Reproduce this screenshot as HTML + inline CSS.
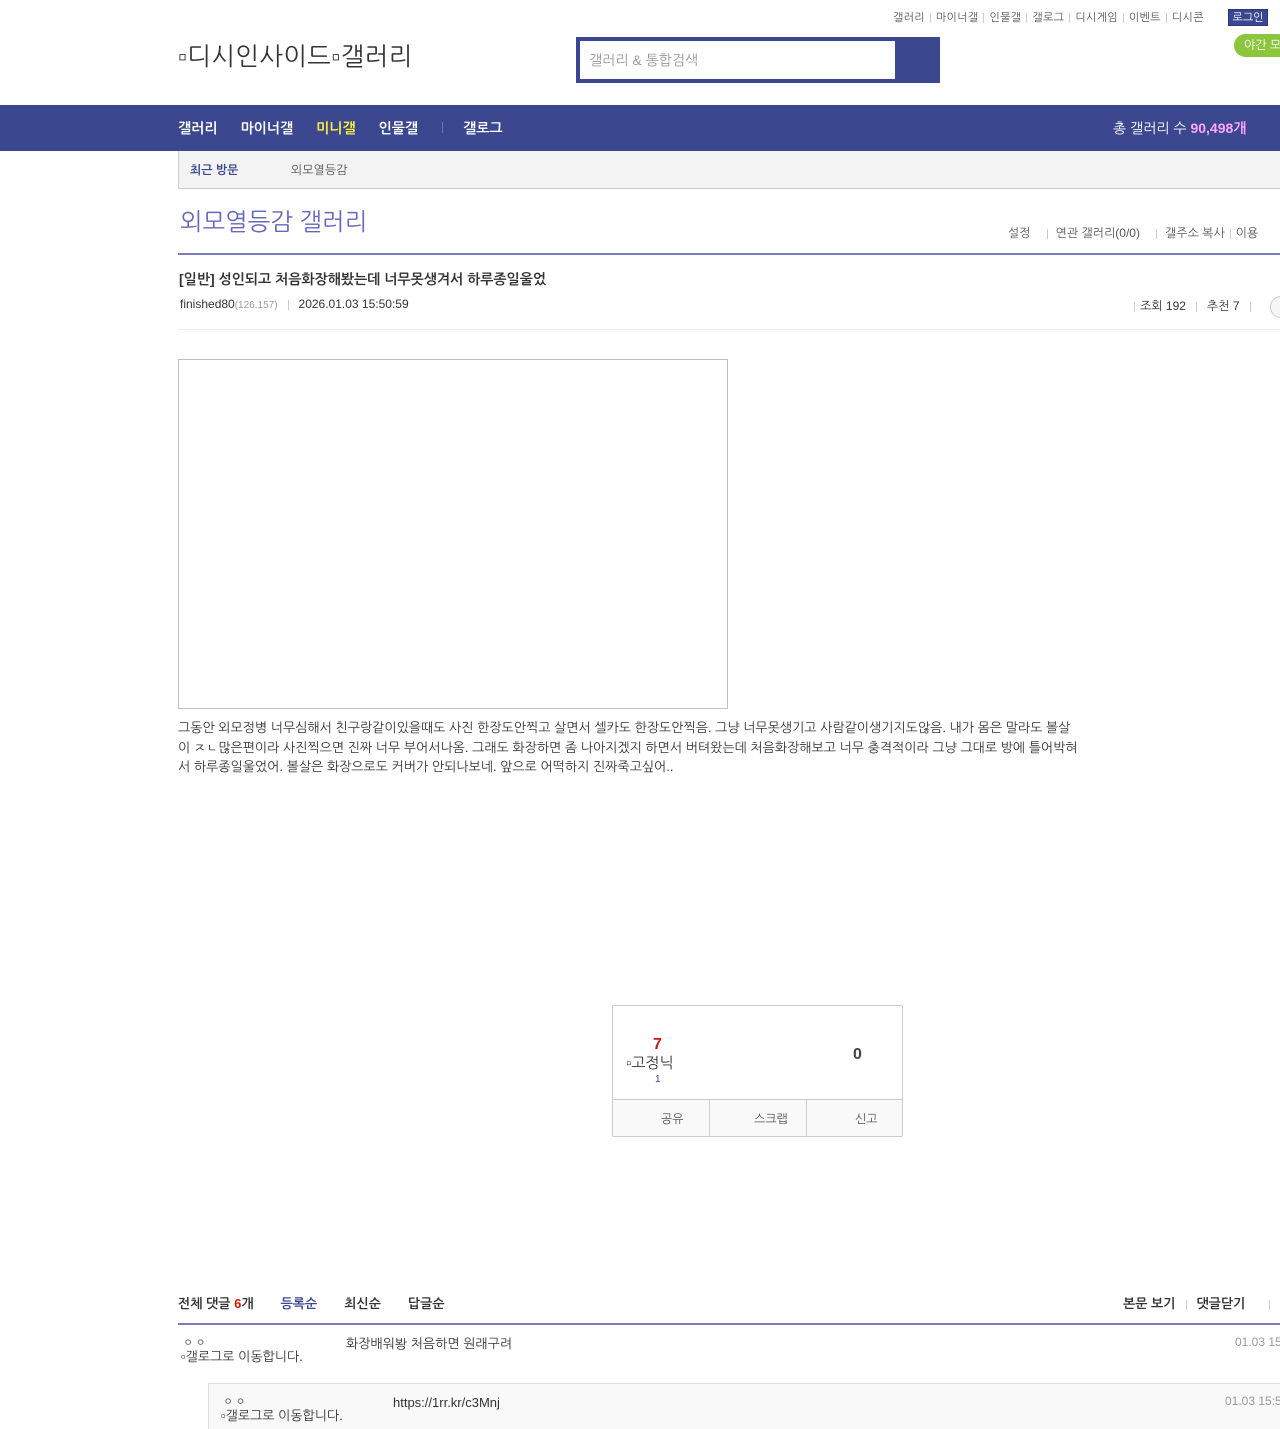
<!DOCTYPE html>
<html><head><meta charset="utf-8"><style>
*{margin:0;padding:0;box-sizing:border-box}
body{width:1280px;height:1429px;overflow:hidden;background:#fff;font-family:"Liberation Sans","NanumGothic","Noto Sans CJK KR",sans-serif;color:#333;position:relative}
.a{position:absolute;white-space:nowrap}
.sep{display:inline-block;width:1px;height:10px;background:#ccc;margin:0 5px;vertical-align:middle}
</style></head><body>
<div class="a" style="top:11px;left:893px;font-size:11px;color:#555;letter-spacing:0.3px">갤러리<span class="sep"></span>마이너갤<span class="sep"></span>인물갤<span class="sep"></span>갤로그<span class="sep"></span>디시게임<span class="sep"></span>이벤트<span class="sep"></span>디시콘</div>
<div class="a" style="top:9px;left:1228px;width:40px;height:17px;background:#3b4890;color:#fff;font-size:11px;line-height:17px;text-align:center;border:1px solid #29367a">로그인</div>
<div class="a" style="top:34px;left:1234px;width:60px;height:23px;background:#8cc63f;border-radius:12px;color:#fff;font-size:12px;line-height:23px;padding-left:10px">야간 모드</div>
<div class="a" style="top:41px;left:178px;font-size:25px;color:#333;letter-spacing:0.5px">▫디시인사이드▫갤러리</div>
<div class="a" style="top:37px;left:576px;width:364px;height:46px;background:#3b4890"></div>
<div class="a" style="top:41px;left:580px;width:315px;height:38px;background:#fff;font-size:14px;color:#999;line-height:38px;padding-left:9px">갤러리 &amp; 통합검색</div>
<div class="a" style="top:105px;left:0;width:1280px;height:46px;background:#3b4890"></div>
<div class="a" style="top:120px;left:178px;font-size:14px;font-weight:bold;color:#fff">갤러리<span style="margin-left:23px">마이너갤</span><span style="margin-left:23px;color:#ffef3a">미니갤</span><span style="margin-left:23px">인물갤</span><span style="display:inline-block;width:1px;height:11px;background:#6a76b0;margin:0 20px 0 24px"></span>갤로그</div>
<div class="a" style="top:120px;left:1113px;font-size:14px;color:#fff">총 갤러리 수 <b style="color:#ffa7ff">90,498개</b></div>
<div class="a" style="top:151px;left:178px;width:1102px;height:38px;background:#f3f3f3;border-left:1px solid #ccc;border-bottom:1px solid #ccc"></div>
<div class="a" style="top:163px;left:190px;font-size:12px;font-weight:bold;color:#3b4890">최근 방문</div>
<div class="a" style="top:163px;left:291px;font-size:12px;color:#555">외모열등감</div>
<div class="a" style="top:207px;left:180px;font-size:24px;color:#6767bd">외모열등감 갤러리</div>
<div class="a" style="top:226px;left:1008px;font-size:12px;color:#555">설정<span class="sep" style="margin:0 8px 0 16px"></span>연관 갤러리(0/0)<span class="sep" style="margin:0 8px 0 16px"></span>갤주소 복사<span class="sep"></span>이용</div>
<div class="a" style="top:253px;left:178px;width:1102px;height:2px;background:#7b7bb8"></div>
<div class="a" style="top:271px;left:179px;font-size:14px;font-weight:bold;color:#333">[일반] 성인되고 처음화장해봤는데 너무못생겨서 하루종일울었</div>
<div class="a" style="top:297px;left:180px;font-size:12px;color:#333">finished80<span style="font-size:10px;color:#999">(126.157)</span><span class="sep" style="margin:0 10px"></span>2026.01.03 15:50:59</div>
<div class="a" style="top:299px;left:1129px;font-size:12px;color:#333"><span class="sep"></span>조회 192<span class="sep" style="margin:0 10px"></span>추천 7<span class="sep" style="margin:0 10px"></span></div>
<div class="a" style="top:296px;left:1270px;width:24px;height:22px;border:1px solid #ccc;border-radius:11px;background:#f6f6f6"></div>
<div class="a" style="top:329px;left:178px;width:1102px;height:1px;background:#eee"></div>
<div class="a" style="top:359px;left:178px;width:550px;height:350px;border:1px solid #c0c0c0"></div>
<div class="a" style="top:718px;left:178px;width:900px;white-space:normal;font-size:13px;line-height:19.5px;color:#333">그동안 외모정병 너무심해서 친구랑같이있을때도 사진 한장도안찍고 살면서 셀카도 한장도안찍음. 그냥 너무못생기고 사람같이생기지도않음. 내가 몸은 말라도 볼살이 ㅈㄴ많은편이라 사진찍으면 진짜 너무 부어서나옴. 그래도 화장하면 좀 나아지겠지 하면서 버텨왔는데 처음화장해보고 너무 충격적이라 그냥 그대로 방에 틀어박혀서 하루종일울었어. 볼살은 화장으로도 커버가 안되나보네. 앞으로 어떡하지 진짜죽고싶어..</div>
<div class="a" style="top:1005px;left:612px;width:291px;height:132px;border:1px solid #ccc;border-radius:2px"></div>
<div class="a" style="top:1099px;left:613px;width:289px;height:37px;background:#f9f9f9;border-top:1px solid #ccc"></div>
<div class="a" style="top:1099px;left:709px;width:1px;height:37px;background:#ccc"></div>
<div class="a" style="top:1099px;left:806px;width:1px;height:37px;background:#ccc"></div>
<div class="a" style="top:1112px;left:661px;font-size:12px;color:#555">공유</div>
<div class="a" style="top:1112px;left:754px;font-size:12px;color:#555">스크랩</div>
<div class="a" style="top:1112px;left:855px;font-size:12px;color:#555">신고</div>
<div class="a" style="top:1036px;left:653px;font-size:16px;font-weight:bold;color:#c21b1b">7</div>
<div class="a" style="top:1054px;left:626px;font-size:15px;color:#333">▫고정닉</div>
<div class="a" style="top:1074px;left:655px;font-size:10px;color:#3b4890">1</div>
<div class="a" style="top:1046px;left:853px;font-size:16px;font-weight:bold;color:#444">0</div>
<div class="a" style="top:1296px;left:178px;font-size:13px;font-weight:bold;color:#333">전체 댓글 <span style="color:#d31900">6</span>개<span style="margin-left:27px;color:#3b4890">등록순</span><span style="margin-left:27px">최신순</span><span style="margin-left:27px">답글순</span></div>
<div class="a" style="top:1296px;left:1123px;font-size:13px;font-weight:bold;color:#333">본문 보기<span class="sep" style="margin:0 10px"></span>댓글닫기<span class="sep" style="margin:0 0 0 24px"></span></div>
<div class="a" style="top:1323px;left:178px;width:1102px;height:2px;background:#7b7bb8"></div>
<div class="a" style="top:1336px;left:183px;font-size:11px;color:#555;letter-spacing:2px">ㅇㅇ</div>
<div class="a" style="top:1350px;left:181px;width:125px;white-space:normal;font-size:13px;line-height:13px;color:#333">▫갤로그로 이동합니다.</div>
<div class="a" style="top:1336px;left:346px;font-size:13px;color:#333">화장배워봥 처음하면 원래구려</div>
<div class="a" style="top:1335px;left:1235px;font-size:12px;color:#999">01.03 15:51</div>
<div class="a" style="top:1383px;left:208px;width:1072px;height:46px;background:#f9f9f9;border-top:1px solid #ddd;border-left:1px solid #ddd"></div>
<div class="a" style="top:1395px;left:223px;font-size:11px;color:#555;letter-spacing:2px">ㅇㅇ</div>
<div class="a" style="top:1409px;left:221px;width:125px;white-space:normal;font-size:13px;line-height:13px;color:#333">▫갤로그로 이동합니다.</div>
<div class="a" style="top:1395px;left:393px;font-size:13px;color:#333">https://1rr.kr/c3Mnj</div>
<div class="a" style="top:1394px;left:1225px;font-size:12px;color:#999">01.03 15:52</div>
</body></html>
